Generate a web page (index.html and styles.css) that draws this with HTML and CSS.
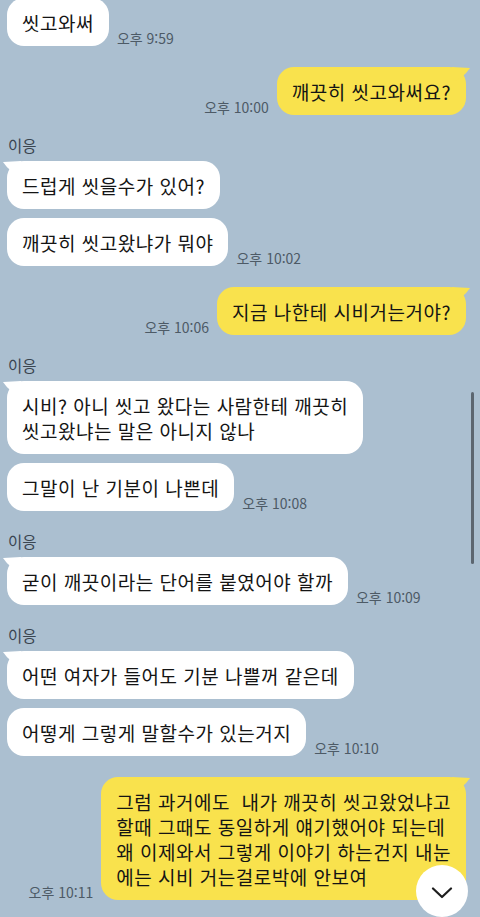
FILE: index.html
```html
<!DOCTYPE html>
<html lang="ko">
<head>
    <meta charset="UTF-8">
    <meta name="viewport" content="width=device-width, initial-scale=1.0">
    <title>채팅</title>
    <link rel="stylesheet" href="styles.css">
</head>
<body>
    <div class="chat">
        <!-- 상대 -->
        <div class="group in first-group">
            <div class="row">
                <div class="bubble">씻고와써</div>
                <span class="time">오후 9:59</span>
            </div>
        </div>

        <div class="group out">
            <div class="row">
                <span class="time">오후 10:00</span>
                <div class="bubble tail">깨끗히 씻고와써요?</div>
            </div>
        </div>

        <div class="group in">
            <div class="name">이응</div>
            <div class="row">
                <div class="bubble tail">드럽게 씻을수가 있어?</div>
            </div>
            <div class="row">
                <div class="bubble">깨끗히 씻고왔냐가 뭐야</div>
                <span class="time">오후 10:02</span>
            </div>
        </div>

        <div class="group out">
            <div class="row">
                <span class="time">오후 10:06</span>
                <div class="bubble tail">지금 나한테 시비거는거야?</div>
            </div>
        </div>

        <div class="group in">
            <div class="name">이응</div>
            <div class="row">
                <div class="bubble tail">시비? 아니 씻고 왔다는 사람한테 깨끗히<br>씻고왔냐는 말은 아니지 않나</div>
            </div>
            <div class="row">
                <div class="bubble">그말이 난 기분이 나쁜데</div>
                <span class="time">오후 10:08</span>
            </div>
        </div>

        <div class="group in">
            <div class="name">이응</div>
            <div class="row">
                <div class="bubble tail">굳이 깨끗이라는 단어를 붙였어야 할까</div>
                <span class="time">오후 10:09</span>
            </div>
        </div>

        <div class="group in">
            <div class="name">이응</div>
            <div class="row">
                <div class="bubble tail">어떤 여자가 들어도 기분 나쁠꺼 같은데</div>
            </div>
            <div class="row">
                <div class="bubble">어떻게 그렇게 말할수가 있는거지</div>
                <span class="time">오후 10:10</span>
            </div>
        </div>

        <div class="group out">
            <div class="row">
                <span class="time">오후 10:11</span>
                <div class="bubble tail">그럼 과거에도&nbsp; 내가 깨끗히 씻고왔었냐고<br>할때 그때도 동일하게 얘기했어야 되는데<br>왜 이제와서 그렇게 이야기 하는건지 내눈<br>에는 시비 거는걸로박에 안보여</div>
            </div>
        </div>
    </div>

    <div class="scrollbar"></div>

    <button class="scroll-down" aria-label="아래로">
        <svg width="22" height="12" viewBox="0 0 22 12">
            <path d="M2 1.5 L11 10 L20 1.5" fill="none" stroke="#1e1e1e" stroke-width="2.2" stroke-linecap="round" stroke-linejoin="round"/>
        </svg>
    </button>
</body>
</html>
```

FILE: styles.css
```css
body {
    margin: 0;
    width: 480px;
    height: 917px;
    overflow: hidden;
    position: relative;
    background-color: #abbfd0;
    font-family: "Noto Sans CJK KR", "Noto Sans", sans-serif;
    color: #141414;
}

.chat {
    display: flex;
    flex-direction: column;
    padding: 0 14px 0 7px;
}

.group {
    display: flex;
    flex-direction: column;
    gap: 9px;
    margin-top: 20px;
}

.group.out {
    margin-top: 21px;
}

.first-group {
    margin-top: -2px;
}

.name {
    font-size: 15.5px;
    line-height: 20px;
    color: #3a4550;
    padding-left: 1px;
    margin-bottom: -3px;
}

.row {
    display: flex;
    align-items: flex-end;
    gap: 8px;
}

.out .row {
    justify-content: flex-end;
}

.bubble {
    position: relative;
    background-color: #ffffff;
    border-radius: 17px;
    padding: 11.5px 15px;
    font-size: 19px;
    letter-spacing: 0.5px;
    line-height: 25px;
    white-space: nowrap;
}

.out .bubble {
    background-color: #f9e24d;
}

/* 말풍선 꼬리 */
.bubble.tail::before {
    content: "";
    position: absolute;
    top: 0;
    left: -4px;
    width: 18px;
    height: 14px;
    background-color: inherit;
    clip-path: path("M0 1 L18 0 L18 14 Q8 13 0 1 Z");
}

.out .bubble.tail::before {
    left: auto;
    right: -4px;
    clip-path: path("M18 1 L0 0 L0 14 Q10 13 18 1 Z");
}

.time {
    font-size: 14px;
    line-height: 13px;
    margin-bottom: 1px;
    color: #4d5a66;
    white-space: nowrap;
}

.scrollbar {
    position: absolute;
    right: 6px;
    top: 392px;
    width: 3px;
    height: 172px;
    border-radius: 2px;
    background-color: #5c6670;
}

.scroll-down {
    position: absolute;
    right: 12px;
    top: 865px;
    width: 52px;
    height: 52px;
    border: none;
    border-radius: 50%;
    background-color: #ffffff;
    display: flex;
    align-items: center;
    justify-content: center;
    padding: 0;
    padding-top: 3px;
}
```
